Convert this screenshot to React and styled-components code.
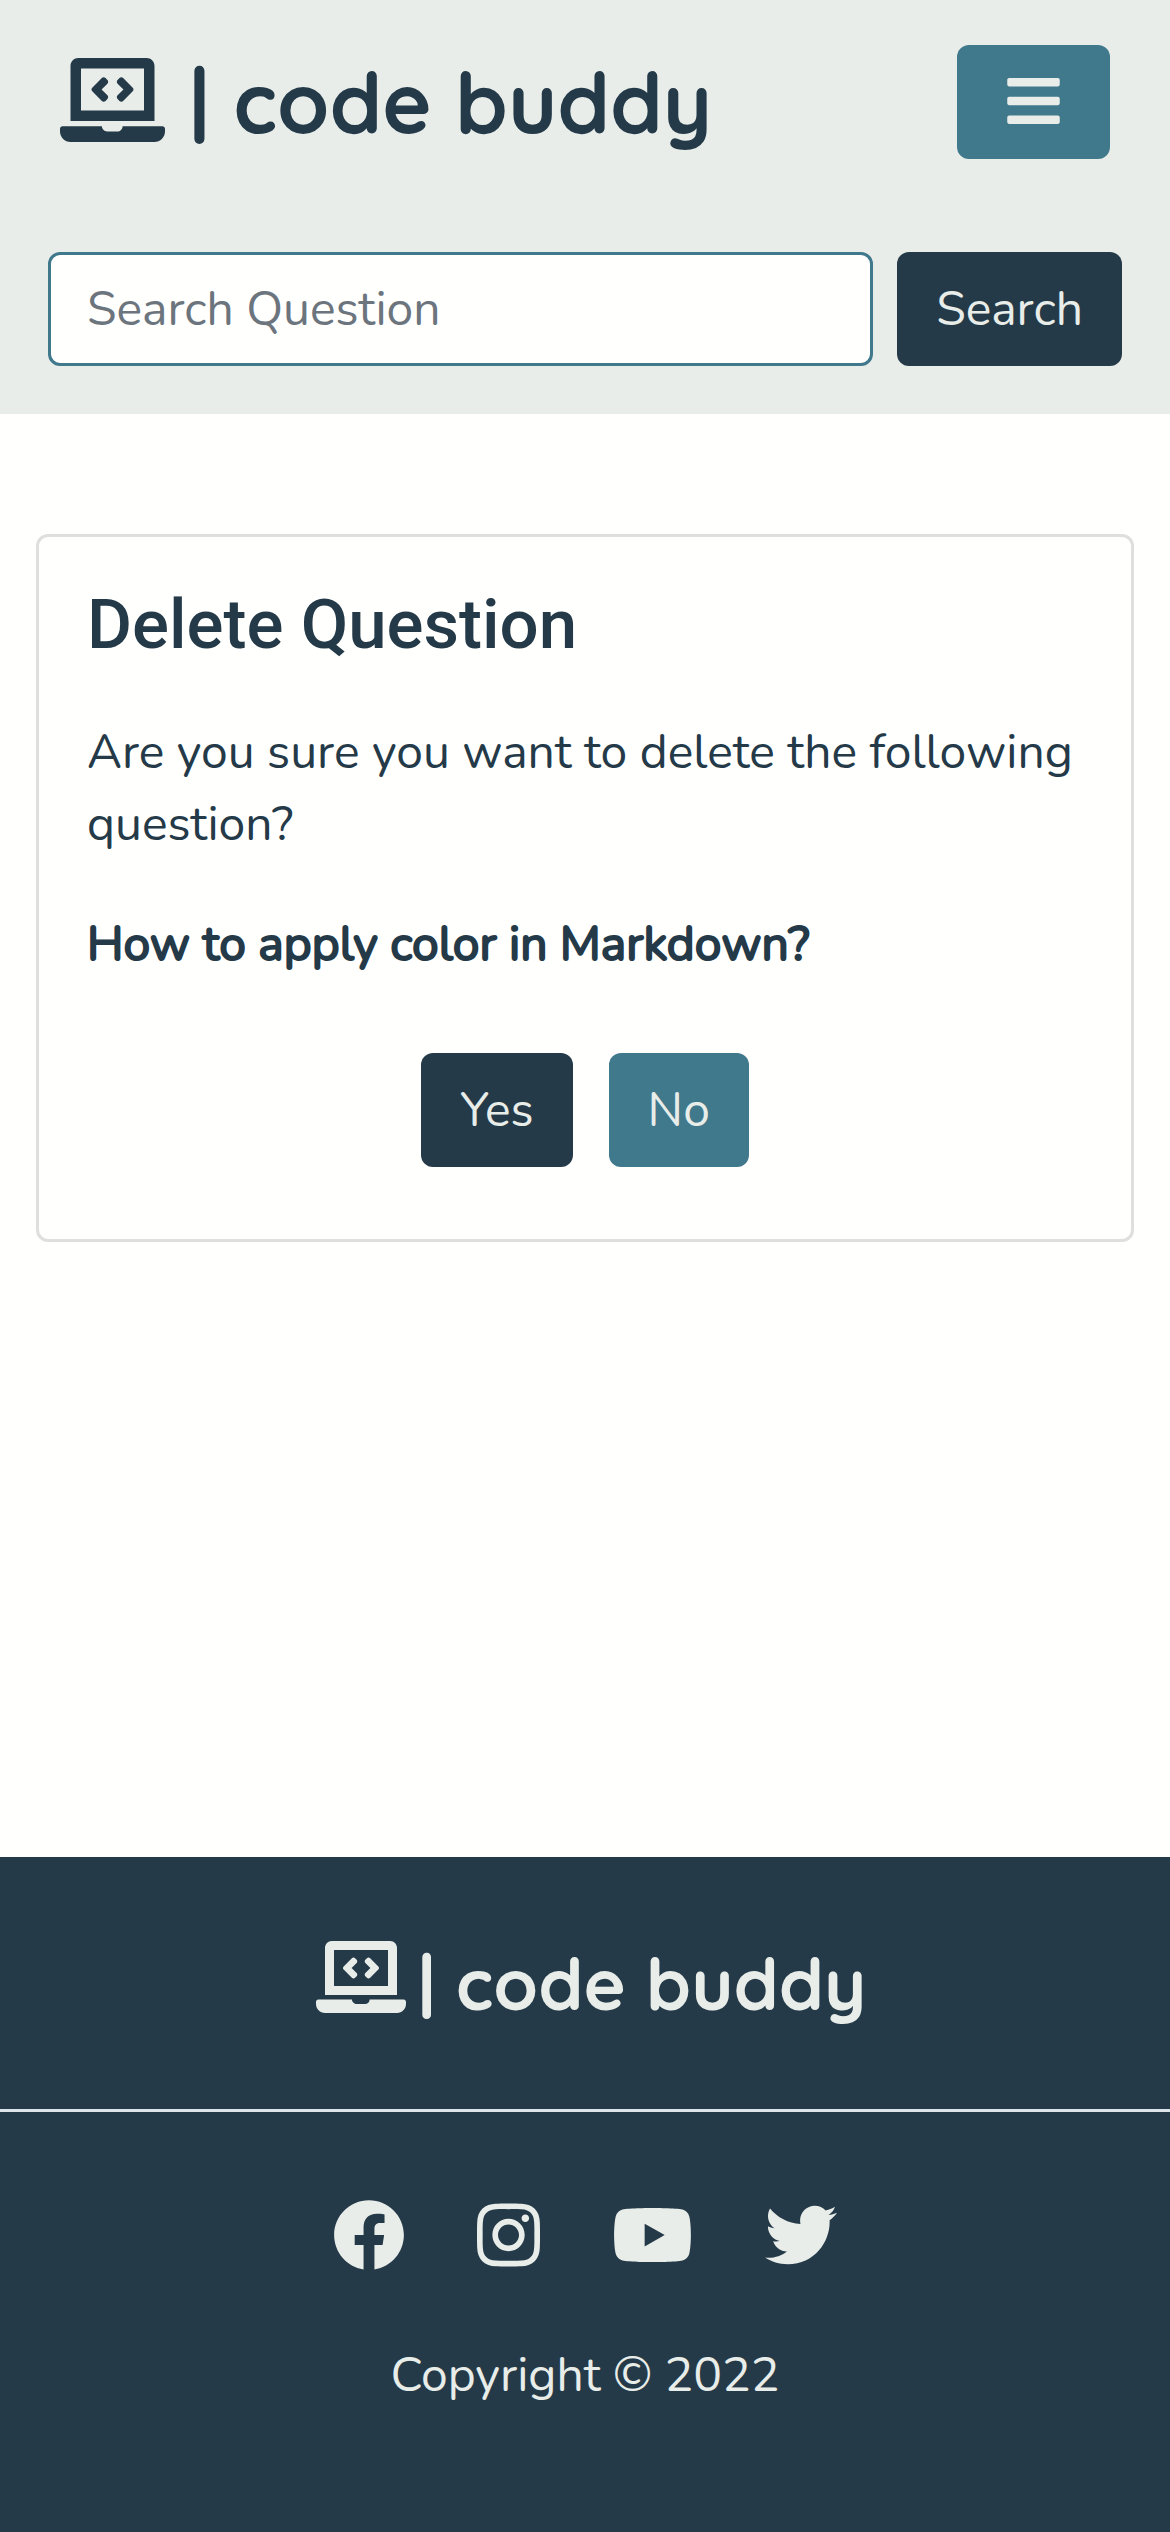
import React from "react";
import styled, { createGlobalStyle } from "styled-components";
import {
  FaBars,
  FaFacebook,
  FaInstagram,
  FaLaptopCode,
  FaTwitter,
  FaYoutube,
} from "react-icons/fa";

const color = {
  navy: "#253a48",
  teal: "#40788c",
  mist: "#e8ede9",
  paper: "#fffffe",
  line: "#dfdfde",
  rule: "#dee5e8",
  muted: "#6c757d",
};

const bodyFont = `Nunito, Lato, "Open Sans", sans-serif`;
const brandFont = `Quicksand, Lato, sans-serif`;

const GlobalStyle = createGlobalStyle`
  *, *::before, *::after { box-sizing: border-box; }
  body {
    margin: 0;
    background: ${color.paper};
    color: ${color.navy};
    font: 400 48px/72px ${bodyFont};
  }
`;

const Page = styled.div`
  display: flex;
  flex-direction: column;
  min-height: 100vh;
`;

const Header = styled.header`
  display: flex;
  flex-direction: column;
  gap: 93px;
  padding: 45px 48px 48px;
  background: ${color.mist};
`;

const TopBar = styled.div`
  display: flex;
  align-items: center;
  justify-content: space-between;
  padding: 0 12px;
`;

const Brand = styled.a`
  display: flex;
  align-items: center;
  gap: ${(p) => (p.$small ? "12px" : "24px")};
  color: inherit;
  font: 700 ${(p) => (p.$small ? "72px" : "84px")}/108px ${brandFont};
  text-decoration: none;

  svg {
    width: 1.25em;
    height: 1em;
    margin-bottom: ${(p) => (p.$small ? "12px" : "4px")};
  }
`;

const Button = styled.button`
  padding: 18px 36px;
  border: 3px solid transparent;
  border-radius: 12px;
  background: ${(p) => (p.$teal ? color.teal : color.navy)};
  color: ${color.mist};
  font: inherit;
  cursor: pointer;
`;

const MenuButton = styled(Button)`
  display: flex;
  align-items: center;
  justify-content: center;
  height: 114px;
  padding: 0 47px;

  svg {
    width: 53px;
    height: 60px;
    margin-bottom: 3px;
  }
`;

const SearchForm = styled.form`
  display: flex;
  gap: 24px;
`;

const SearchInput = styled.input`
  flex: 1;
  min-width: 0;
  padding: 18px 36px;
  border: 3px solid ${color.teal};
  border-radius: 12px;
  background: ${color.paper};
  color: ${color.navy};
  font: inherit;

  &::placeholder {
    color: ${color.muted};
    opacity: 1;
  }
`;

const Main = styled.main`
  flex: 1;
  padding: 120px 36px;
`;

const Card = styled.section`
  padding: 48px;
  border: 3px solid ${color.line};
  border-radius: 12px;
`;

const Title = styled.h1`
  margin: 0 0 51px;
  font: 500 69px/80px Roboto, sans-serif;
`;

const Text = styled.p`
  margin: 0 0 48px;
`;

const Question = styled(Text)`
  -webkit-text-stroke: 2px currentColor;
`;

const Actions = styled.div`
  display: flex;
  justify-content: center;
  gap: 36px;
  padding: 25px 0 24px;
`;

const Footer = styled.footer`
  background: ${color.navy};
  color: ${color.mist};
`;

const FooterBrand = styled.div`
  display: flex;
  justify-content: center;
  padding: 72px 36px 72px 48px;
  border-bottom: 3px solid ${color.rule};
`;

const FooterBody = styled.div`
  display: flex;
  flex-direction: column;
  align-items: center;
  gap: 68px;
  padding: 87px 36px 121px;
`;

const Social = styled.nav`
  display: flex;
  gap: 72px;
`;

const SocialLink = styled.a`
  display: flex;
  color: inherit;

  svg {
    width: ${(p) => p.$width}px;
    height: 72px;
  }
`;

const Copyright = styled.p`
  margin: 0;
`;

const links = [
  ["Facebook", FaFacebook, 72],
  ["Instagram", FaInstagram, 63],
  ["YouTube", FaYoutube, 81],
  ["Twitter", FaTwitter, 72],
];

export default function App() {
  return (
    <Page>
      <GlobalStyle />
      <Header>
        <TopBar>
          <Brand href="#">
            <FaLaptopCode aria-hidden="true" />
            <span>| code buddy</span>
          </Brand>
          <MenuButton $teal type="button" aria-label="Menu">
            <FaBars aria-hidden="true" />
          </MenuButton>
        </TopBar>
        <SearchForm role="search" onSubmit={(e) => e.preventDefault()}>
          <SearchInput
            type="text"
            aria-label="Search Question"
            placeholder="Search Question"
          />
          <Button type="submit">Search</Button>
        </SearchForm>
      </Header>
      <Main>
        <Card>
          <Title>Delete Question</Title>
          <Text>Are you sure you want to delete the following question?</Text>
          <Question>How to apply color in Markdown?</Question>
          <Actions>
            <Button type="button">Yes</Button>
            <Button type="button" $teal>No</Button>
          </Actions>
        </Card>
      </Main>
      <Footer>
        <FooterBrand>
          <Brand href="#" $small>
            <FaLaptopCode aria-hidden="true" />
            <span>| code buddy</span>
          </Brand>
        </FooterBrand>
        <FooterBody>
          <Social aria-label="Social media">
            {links.map(([name, Icon, width]) => (
              <SocialLink key={name} href="#" aria-label={name} $width={width}>
                <Icon aria-hidden="true" />
              </SocialLink>
            ))}
          </Social>
          <Copyright>Copyright © 2022</Copyright>
        </FooterBody>
      </Footer>
    </Page>
  );
}
